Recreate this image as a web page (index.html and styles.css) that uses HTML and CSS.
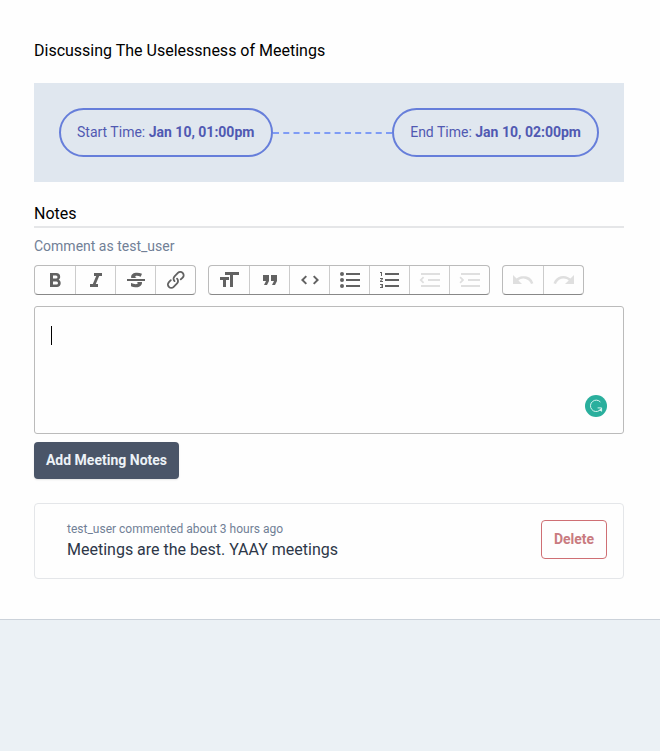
FILE: index.html
```html
<!DOCTYPE html>
<html lang="en">
<head>
<meta charset="utf-8">
<title>Meeting</title>
<link rel="stylesheet" href="styles.css">
</head>
<body>
<main class="meeting">
  <h1 class="title">Discussing The Uselessness of Meetings</h1>
  <section class="times">
    <div class="pill pill-start">Start Time: <strong>Jan 10, 01:00pm</strong></div>
    <div class="connector"></div>
    <div class="pill">End Time: <strong>Jan 10, 02:00pm</strong></div>
  </section>
  <h2 class="notes-title">Notes</h2>
  <p class="comment-as">Comment as test_user</p>
  <div class="toolbar">
    <div class="group">
      <button class="tool" aria-label="Bold"><svg viewBox="0 0 24 24"><path d="M15.6 11.8c1-.7 1.6-1.8 1.6-2.8a4 4 0 0 0-4-4H7v14h7c2.1 0 3.7-1.7 3.7-3.8 0-1.5-.8-2.8-2.1-3.4zM10 7.5h3a1.5 1.5 0 1 1 0 3h-3v-3zm3.5 9H10v-3h3.5a1.5 1.5 0 1 1 0 3z"/></svg></button>
      <button class="tool" aria-label="Italic"><svg viewBox="0 0 24 24"><path d="M10 5v3h2.2l-3.4 8H6v3h8v-3h-2.2l3.4-8H18V5h-8z"/></svg></button>
      <button class="tool" aria-label="Strikethrough"><svg viewBox="0 0 24 24"><path d="M12.73 14l.28.14c.26.15.45.3.57.44.12.14.18.3.18.5 0 .3-.15.56-.44.75-.3.2-.76.3-1.39.3A13.52 13.52 0 0 1 7 14.95v3.37a10.64 10.64 0 0 0 4.84.88c1.26 0 2.35-.19 3.28-.56.93-.37 1.64-.9 2.14-1.57s.74-1.45.74-2.32c0-.26-.02-.51-.06-.75h-5.21zm-5.5-4c-.08-.34-.12-.7-.12-1.1 0-1.29.52-2.3 1.58-3.02 1.05-.72 2.5-1.08 4.34-1.08 1.62 0 3.28.34 4.97 1l-1.3 2.93c-1.47-.6-2.73-.9-3.8-.9-.55 0-.96.08-1.2.26-.26.17-.38.38-.38.64 0 .27.16.52.48.74.17.12.53.3 1.05.53H7.23zM3 13h18v-2H3v2z"/></svg></button>
      <button class="tool" aria-label="Link"><svg viewBox="0 0 24 24"><path d="M9.88 13.7a4.3 4.3 0 0 1 0-6.07l3.37-3.37a4.26 4.26 0 0 1 6.07 0 4.3 4.3 0 0 1 0 6.06l-1.96 1.72a.91.91 0 1 1-1.3-1.3l1.97-1.71a2.46 2.46 0 0 0-3.48-3.48l-3.38 3.37a2.46 2.46 0 0 0 0 3.48.91.91 0 1 1-1.3 1.3z"/><path d="M4.25 19.46a4.3 4.3 0 0 1 0-6.07l1.93-1.9a.91.91 0 1 1 1.3 1.3l-1.93 1.9a2.46 2.46 0 0 0 3.48 3.48l3.37-3.38c.96-.96.96-2.52 0-3.48a.91.91 0 1 1 1.3-1.3 4.3 4.3 0 0 1 0 6.07l-3.38 3.38a4.26 4.26 0 0 1-6.07 0z"/></svg></button>
    </div>
    <div class="group">
      <button class="tool" aria-label="Heading"><svg viewBox="0 0 24 24"><path d="M12 9v3H9v7H6v-7H3V9h9zM8 4h14v3h-6v12h-3V7H8V4z"/></svg></button>
      <button class="tool" aria-label="Quote"><svg viewBox="0 0 24 24"><path d="M6 17h3l2-4V7H5v6h3zm8 0h3l2-4V7h-6v6h3z"/></svg></button>
      <button class="tool" aria-label="Code"><svg viewBox="0 0 24 24"><path d="M18.2 12L15 15.2l1.4 1.4L21 12l-4.6-4.6L15 8.8l3.2 3.2zM5.8 12L9 8.8 7.6 7.4 3 12l4.6 4.6L9 15.2 5.8 12z"/></svg></button>
      <button class="tool" aria-label="Bullets"><svg viewBox="0 0 24 24"><path d="M4 4a2 2 0 1 0 0 4 2 2 0 0 0 0-4zm0 6a2 2 0 1 0 0 4 2 2 0 0 0 0-4zm0 6a2 2 0 1 0 0 4 2 2 0 0 0 0-4zm4 3h14v-2H8v2zm0-6h14v-2H8v2zm0-8v2h14V5H8z"/></svg></button>
      <button class="tool" aria-label="Numbers"><svg viewBox="0 0 24 24"><path d="M2 17h2v.5H3v1h1v.5H2v1h3v-4H2v1zm1-9h1V4H2v1h1v3zm-1 3h1.8L2 13.1v.9h3v-1H3.2L5 10.9V10H2v1zm5-6v2h14V5H7zm0 14h14v-2H7v2zm0-6h14v-2H7v2z"/></svg></button>
      <button class="tool" disabled aria-label="Decrease level"><svg viewBox="0 0 24 24"><path d="M3 19h19v-2H3v2zm7-6h12v-2H10v2zM5 8.5L1.5 12 5 15.5l1.2-1.3L4 12l2.2-2.2zM3 5v2h19V5H3z"/></svg></button>
      <button class="tool" disabled aria-label="Increase level"><svg viewBox="0 0 24 24"><path d="M3 19h19v-2H3v2zm7-6h12v-2H10v2zM2.7 8.5L6.2 12l-3.5 3.5-1.2-1.3L3.7 12 1.5 9.8zM3 5v2h19V5H3z"/></svg></button>
    </div>
    <div class="group">
      <button class="tool" disabled aria-label="Undo"><svg viewBox="0 0 24 24"><path d="M12.5 8c-2.6 0-5 1-6.9 2.6L2 7v9h9l-3.6-3.6A8 8 0 0 1 20 16l2.4-.8a10.5 10.5 0 0 0-10-7.2z"/></svg></button>
      <button class="tool" disabled aria-label="Redo"><svg viewBox="0 0 24 24"><path d="M18.4 10.6a10.5 10.5 0 0 0-16.9 4.6L4 16a8 8 0 0 1 12.7-3.6L13 16h9V7l-3.6 3.6z"/></svg></button>
    </div>
  </div>
  <div class="editor">
    <span class="caret"></span>
    <svg class="checker" viewBox="0 0 22 22"><circle cx="11" cy="11" r="11" fill="#2aaf9d"/><path d="M15.4 7A5.7 5.7 0 1 0 14.6 15.4M12.6 12.9h4v3.6" fill="none" stroke="#d8f5f0" stroke-width="1"/><path d="M13.4 15.4l3.2-2.5v3.4z" fill="#d8f5f0"/></svg>
  </div>
  <button class="add">Add Meeting Notes</button>
  <article class="comment">
    <div>
      <p class="meta">test_user commented about 3 hours ago</p>
      <p class="body">Meetings are the best. YAAY meetings</p>
    </div>
    <button class="delete">Delete</button>
  </article>
</main>
</body>
</html>
```
FILE: styles.css
```css
* { box-sizing: border-box; margin: 0; }
body {
  min-height: 751px;
  background: #ebf1f5;
  color: #000;
  font-family: Roboto, sans-serif;
  font-size: 14px;
  line-height: 21px;
}
button { font-family: inherit; }
.meeting {
  height: 620px;
  padding: 39px 36px 0 34px;
  background: #fefefe;
  border-bottom: 1px solid #cbd2da;
}
.title, .notes-title { font-size: 16px; font-weight: 400; line-height: 24px; }
.times {
  display: flex;
  align-items: center;
  height: 99px;
  margin-top: 20px;
  padding: 0 25px;
  background: #e0e7ef;
}
.pill {
  height: 49px;
  padding: 0 16px;
  border: 2px solid #667eda;
  border-radius: 25px;
  color: #5059b2;
  line-height: 45px;
  white-space: nowrap;
}
.pill-start { width: 214px; }
.pill strong { font-weight: 700; }
.connector { flex: 1; border-top: 2px dashed #7f9cf5; }
.notes-title { height: 26px; margin-top: 20px; border-bottom: 2px solid #e5e6e8; }
.comment-as { margin-top: 8px; color: #718096; }
.toolbar { display: flex; gap: 12px; margin-top: 8px; }
.group {
  display: flex;
  height: 30px;
  border: 1px solid #bbb;
  border-bottom-color: #888;
  border-radius: 4px;
}
.tool {
  display: flex;
  align-items: center;
  justify-content: center;
  width: 40px;
  padding: 0;
  border: 0;
  background: none;
}
.tool + .tool { border-left: 1px solid #ccc; }
.tool svg { width: 24px; height: 24px; flex: none; fill: #626262; }
.tool:disabled svg { fill: #dfdfdf; }
.editor {
  position: relative;
  height: 128px;
  margin-top: 11px;
  padding: 19px 16px;
  border: 1px solid #bbb;
  border-radius: 3px;
}
.caret { display: block; width: 1px; height: 19px; background: #000; }
.checker { position: absolute; right: 16px; bottom: 16px; width: 22px; height: 22px; }
.add {
  display: block;
  width: 145px;
  height: 37px;
  margin-top: 8px;
  padding: 0 0 2px;
  border: 0;
  border-radius: 4px;
  background: #4a5568;
  box-shadow: 0 1px 2px rgba(0, 0, 0, .1);
  color: #edf2f7;
  font-size: 14px;
  font-weight: 700;
}
.comment {
  display: flex;
  justify-content: space-between;
  align-items: flex-start;
  height: 76px;
  margin-top: 24px;
  padding: 16px 16px 0 32px;
  border: 1px solid #e4e6e9;
  border-radius: 4px;
}
.meta { color: #718096; font-size: 12px; line-height: 18px; }
.body { color: #2d3748; font-size: 16px; line-height: 24px; }
.delete {
  width: 66px;
  height: 39px;
  padding: 0 0 2px;
  border: 1px solid #cf6f74;
  border-radius: 4px;
  background: none;
  color: #c97b80;
  font-size: 14px;
  font-weight: 700;
}
```
